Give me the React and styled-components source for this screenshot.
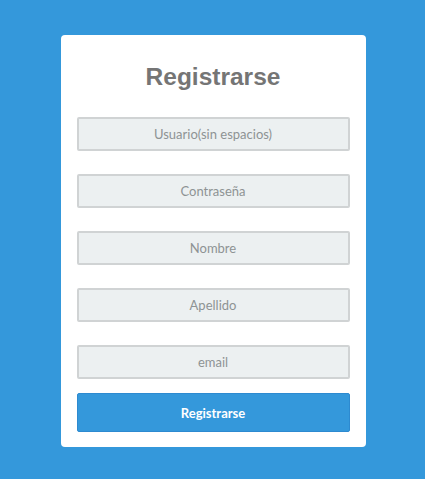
import React from 'react';
import styled, { createGlobalStyle } from 'styled-components';

const GlobalStyle = createGlobalStyle`
    html, body {
        margin: 0;
        padding: 0;
        background: #3498db;
    }
    body {
        font-family: "Open Sans", "Liberation Sans", sans-serif;
    }
`

const fields = ['Usuario(sin espacios)', 'Contraseña', 'Nombre', 'Apellido', 'email'];

function App() {
    return (
        <>
            <GlobalStyle />
            <Page>
                <Card>
                    <Title>Registrarse</Title>
                    <Form onSubmit={e => e.preventDefault()}>
                        { fields.map((f, i) => (
                            <Field key={i} type={f === 'Contraseña' ? 'password' : 'text'} placeholder={f} />
                        ))}
                        <Submit type="submit">Registrarse</Submit>
                    </Form>
                </Card>
            </Page>
        </>
    )
}

export default App;

const Page = styled.div`
    min-height: 479px;
    padding: 35px 0 0 1px;
    box-sizing: border-box;
    display: flex;
    justify-content: center;
    align-items: flex-start;
`

const Card = styled.div`
    width: 305px;
    box-sizing: border-box;
    background: #fff;
    border-radius: 4px;
    padding: 26px 16px 15px;
`

const Title = styled.h1`
    margin: 0 0 24px;
    font-family: "Liberation Sans", Arial, sans-serif;
    font-size: 24.5px;
    line-height: 32px;
    font-weight: bold;
    color: #757575;
    text-align: center;
`

const Form = styled.form`
    display: flex;
    flex-direction: column;
`

const Field = styled.input`
    height: 34px;
    box-sizing: border-box;
    margin-bottom: 23px;
    background: #ecf0f1;
    border: 2px solid #d0d3d4;
    border-radius: 2px;
    text-align: center;
    font-family: "Lato", "Open Sans", sans-serif;
    font-size: 13px;
    color: #7f8c8d;
    outline: none;

    &::placeholder {
        color: #8e9394;
    }

    &:nth-of-type(5) {
        margin-bottom: 14px;
    }
`

const Submit = styled.button`
    height: 39px;
    background: #3498db;
    border: 1px solid #2d8ad0;
    border-radius: 2px;
    color: #fff;
    font-family: "Lato", "Open Sans", sans-serif;
    font-weight: bold;
    font-size: 13px;
    cursor: pointer;
`
